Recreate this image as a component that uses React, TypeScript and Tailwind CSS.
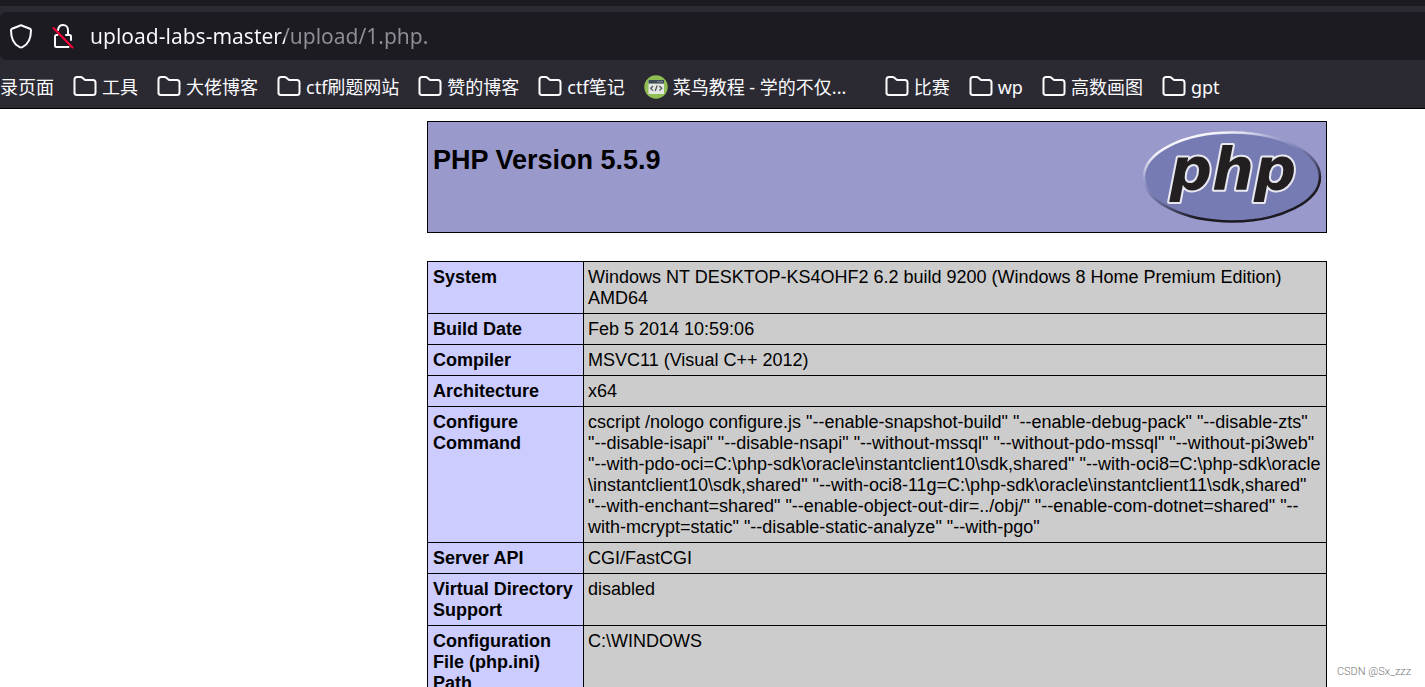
import React from "react";

type Bookmark = {
  title: string;
  kind: "page" | "folder" | "runoob";
};

const bookmarks: Bookmark[] = [
  { title: "录页面", kind: "page" },
  { title: "工具", kind: "folder" },
  { title: "大佬博客", kind: "folder" },
  { title: "ctf刷题网站", kind: "folder" },
  { title: "赞的博客", kind: "folder" },
  { title: "ctf笔记", kind: "folder" },
  { title: "菜鸟教程 - 学的不仅...", kind: "runoob" },
  { title: "比赛", kind: "folder" },
  { title: "wp", kind: "folder" },
  { title: "高数画图", kind: "folder" },
  { title: "gpt", kind: "folder" },
];

// backslash paths may wrap before "\instantclient"
const configureCommand = (
  <>
    cscript /nologo configure.js "--enable-snapshot-build" "--enable-debug-pack"
    "--disable-zts" "--disable-isapi" "--disable-nsapi" "--without-mssql"
    "--without-pdo-mssql" "--without-pi3web"
    "--with-pdo-oci=C:\php-sdk\oracle\instantclient10\sdk,shared"
    "--with-oci8=C:\php-sdk\oracle
    <wbr />
    \instantclient10\sdk,shared"
    "--with-oci8-11g=C:\php-sdk\oracle\instantclient11\sdk,shared"
    "--with-enchant=shared" "--enable-object-out-dir=../obj/"
    "--enable-com-dotnet=shared" "--with-mcrypt=static"
    "--disable-static-analyze" "--with-pgo"
  </>
);

const infoRows: { label: string; value: React.ReactNode }[] = [
  {
    label: "System",
    value:
      "Windows NT DESKTOP-KS4OHF2 6.2 build 9200 (Windows 8 Home Premium Edition) AMD64",
  },
  { label: "Build Date", value: "Feb 5 2014 10:59:06" },
  { label: "Compiler", value: "MSVC11 (Visual C++ 2012)" },
  { label: "Architecture", value: "x64" },
  { label: "Configure Command", value: configureCommand },
  { label: "Server API", value: "CGI/FastCGI" },
  { label: "Virtual Directory Support", value: "disabled" },
  { label: "Configuration File (php.ini) Path", value: "C:\\WINDOWS" },
];

const ShieldIcon = () => (
  <svg width="24" height="26" viewBox="0 0 24 26" fill="none" stroke="#fbfbfe" strokeWidth="2" strokeLinejoin="round">
    <path d="M12 2.2 L21 5.8 Q22 6.2 22 7.3 C22 15 19 21.5 13.4 24.2 Q12 24.9 10.6 24.2 C5 21.5 2 15 2 7.3 Q2 6.2 3 5.8 Z" />
  </svg>
);

const InsecureLockIcon = () => (
  <svg width="22" height="26" viewBox="0 0 22 26" fill="none" strokeLinecap="round">
    <g stroke="#fbfbfe" strokeWidth="2">
      <path d="M6 7 C6.4 4 8.5 2 11 2 C14 2 16 4.3 16 7.2 V11" />
      <path d="M5.5 12 H4 Q3 12 3 13.5 V22.5 Q3 24 4.5 24 H16.5" />
      <path d="M14 12 H17.5 Q19 12 19 13.5 V17" />
    </g>
    <path d="M1.5 5 L20.5 24.5" stroke="#ff0039" strokeWidth="2" />
  </svg>
);

const FolderIcon = () => (
  <svg className="shrink-0" width="24" height="24" viewBox="0 0 24 24" fill="none" stroke="#fbfbfe" strokeWidth="2" strokeLinejoin="round">
    <path d="M1.5 18.5 V4.5 Q1.5 2 4 2 H7.6 Q8.6 2 9.4 2.7 L11.4 4.4 Q12.1 5 13.1 5 H20 Q22.5 5 22.5 7.5 V17.5 Q22.5 20 20 20 H4 Q1.5 20 1.5 17.5 Z" />
  </svg>
);

const RunoobIcon = () => (
  <svg className="shrink-0" width="24" height="24" viewBox="0 0 24 24">
    <circle cx="12" cy="12" r="11.7" fill="#8fbe55" />
    <rect x="4.5" y="5" width="15.5" height="14" fill="#e4e6e0" />
    <rect x="4.5" y="5" width="15.5" height="3.6" fill="#3e4c59" />
    <path d="M13.5 6.8 H18.5" stroke="#b8c1c8" strokeWidth="1" strokeDasharray="1 1" />
    <path d="M9 11 L6.7 13.3 L9 15.6 M15.4 11 L17.7 13.3 L15.4 15.6 M13.2 10.5 L11.2 16" fill="none" stroke="#4a5560" strokeWidth="1.3" />
  </svg>
);

const PhpLogo = () => (
  <svg className="shrink-0" width="180" height="96" viewBox="0 0 180 96" role="img" aria-label="PHP logo">
    <defs>
      <linearGradient id="rim" x1="0.2" y1="0" x2="0.8" y2="1">
        <stop offset="0" stopColor="#ffffff" />
        <stop offset="0.12" stopColor="#f0f0f8" />
        <stop offset="0.28" stopColor="#a3a5cf" />
        <stop offset="0.42" stopColor="#8084b8" />
        <stop offset="0.58" stopColor="#55557a" />
        <stop offset="0.75" stopColor="#1c1a20" />
        <stop offset="1" stopColor="#1c1a20" />
      </linearGradient>
    </defs>
    <ellipse cx="90" cy="48" rx="88" ry="44.5" fill="#777bb3" stroke="url(#rim)" strokeWidth="2.5" />
    <text
      x="91"
      y="61"
      textAnchor="middle"
      className="font-['DejaVu_Sans'] text-[59px] font-bold italic"
      fill="#231f20"
      stroke="#e8e8f0"
      strokeWidth="4"
      strokeLinejoin="round"
      paintOrder="stroke"
    >
      php
    </text>
  </svg>
);

const BookmarkItem = ({ title, kind }: Bookmark) => {
  if (kind === "folder") {
    return (
      <button type="button" className="flex shrink-0 items-center gap-[5px]">
        <FolderIcon />
        {title}
      </button>
    );
  }
  return (
    <a
      href="#"
      className={`flex shrink-0 items-center gap-[5px] ${kind === "runoob" ? "w-[222px]" : ""}`}
    >
      {kind === "runoob" && <RunoobIcon />}
      {title}
    </a>
  );
};

const App: React.FC = () => {
  return (
    <div className="relative flex h-screen flex-col overflow-hidden bg-white">
      <header className="shrink-0 border-b border-black bg-[#2b2a33] font-['Noto_Sans','Noto_Sans_CJK_SC',sans-serif] text-[#fbfbfe]">
        <div className="h-1.5 bg-[#1c1b22]" />
        <div className="mt-1.5 flex h-12 items-center rounded-l-md bg-[#1c1b22] pl-[9px]">
          <button type="button" aria-label="Tracking protection">
            <ShieldIcon />
          </button>
          <button type="button" aria-label="Connection not secure" className="ml-[19px]">
            <InsecureLockIcon />
          </button>
          {/* host part is bright, path is dimmed */}
          <input
            type="text"
            aria-label="Address"
            defaultValue="upload-labs-master/upload/1.php."
            className="ml-4 h-10 min-w-0 flex-1 bg-linear-to-r from-[#fbfbfe] from-[195px] to-[#8f8f97] to-[195px] bg-clip-text text-[21px] text-transparent outline-none"
          />
        </div>
        <nav className="flex h-12 items-center gap-[19px] overflow-hidden pt-1.5 text-lg whitespace-nowrap">
          {bookmarks.map((bookmark) => (
            <BookmarkItem key={bookmark.title} {...bookmark} />
          ))}
        </nav>
      </header>

      <main className="pt-3 pl-[329px] font-['Liberation_Sans',Arial,sans-serif] text-lg leading-[21px] text-black">
        <div className="mx-auto max-w-[900px]">
          <div className="flex h-28 justify-between border border-black bg-[#9999cc] pt-[7px] pr-1 pl-[5px]">
            <h1 className="pt-[15px] text-[27px] leading-8 font-bold">PHP Version 5.5.9</h1>
            <PhpLogo />
          </div>

          <table className="mt-7 w-full table-fixed border-collapse">
            <colgroup>
              <col className="w-[156px]" />
              <col />
            </colgroup>
            <tbody>
              {infoRows.map((row) => (
                <tr key={row.label} className="align-top">
                  <th scope="row" className="border border-black bg-[#ccccff] pt-[5px] pr-1 pb-1 pl-[5px] text-left font-bold">
                    {row.label}
                  </th>
                  <td className="border border-black bg-[#cccccc] px-1 pt-[5px] pb-1">{row.value}</td>
                </tr>
              ))}
            </tbody>
          </table>
        </div>
      </main>

      <span className="absolute right-3.5 bottom-1.5 font-['Roboto',sans-serif] text-[11px] leading-[18px] font-light text-[#777777]">
        CSDN @Sx_zzz
      </span>
    </div>
  );
};

export default App;
